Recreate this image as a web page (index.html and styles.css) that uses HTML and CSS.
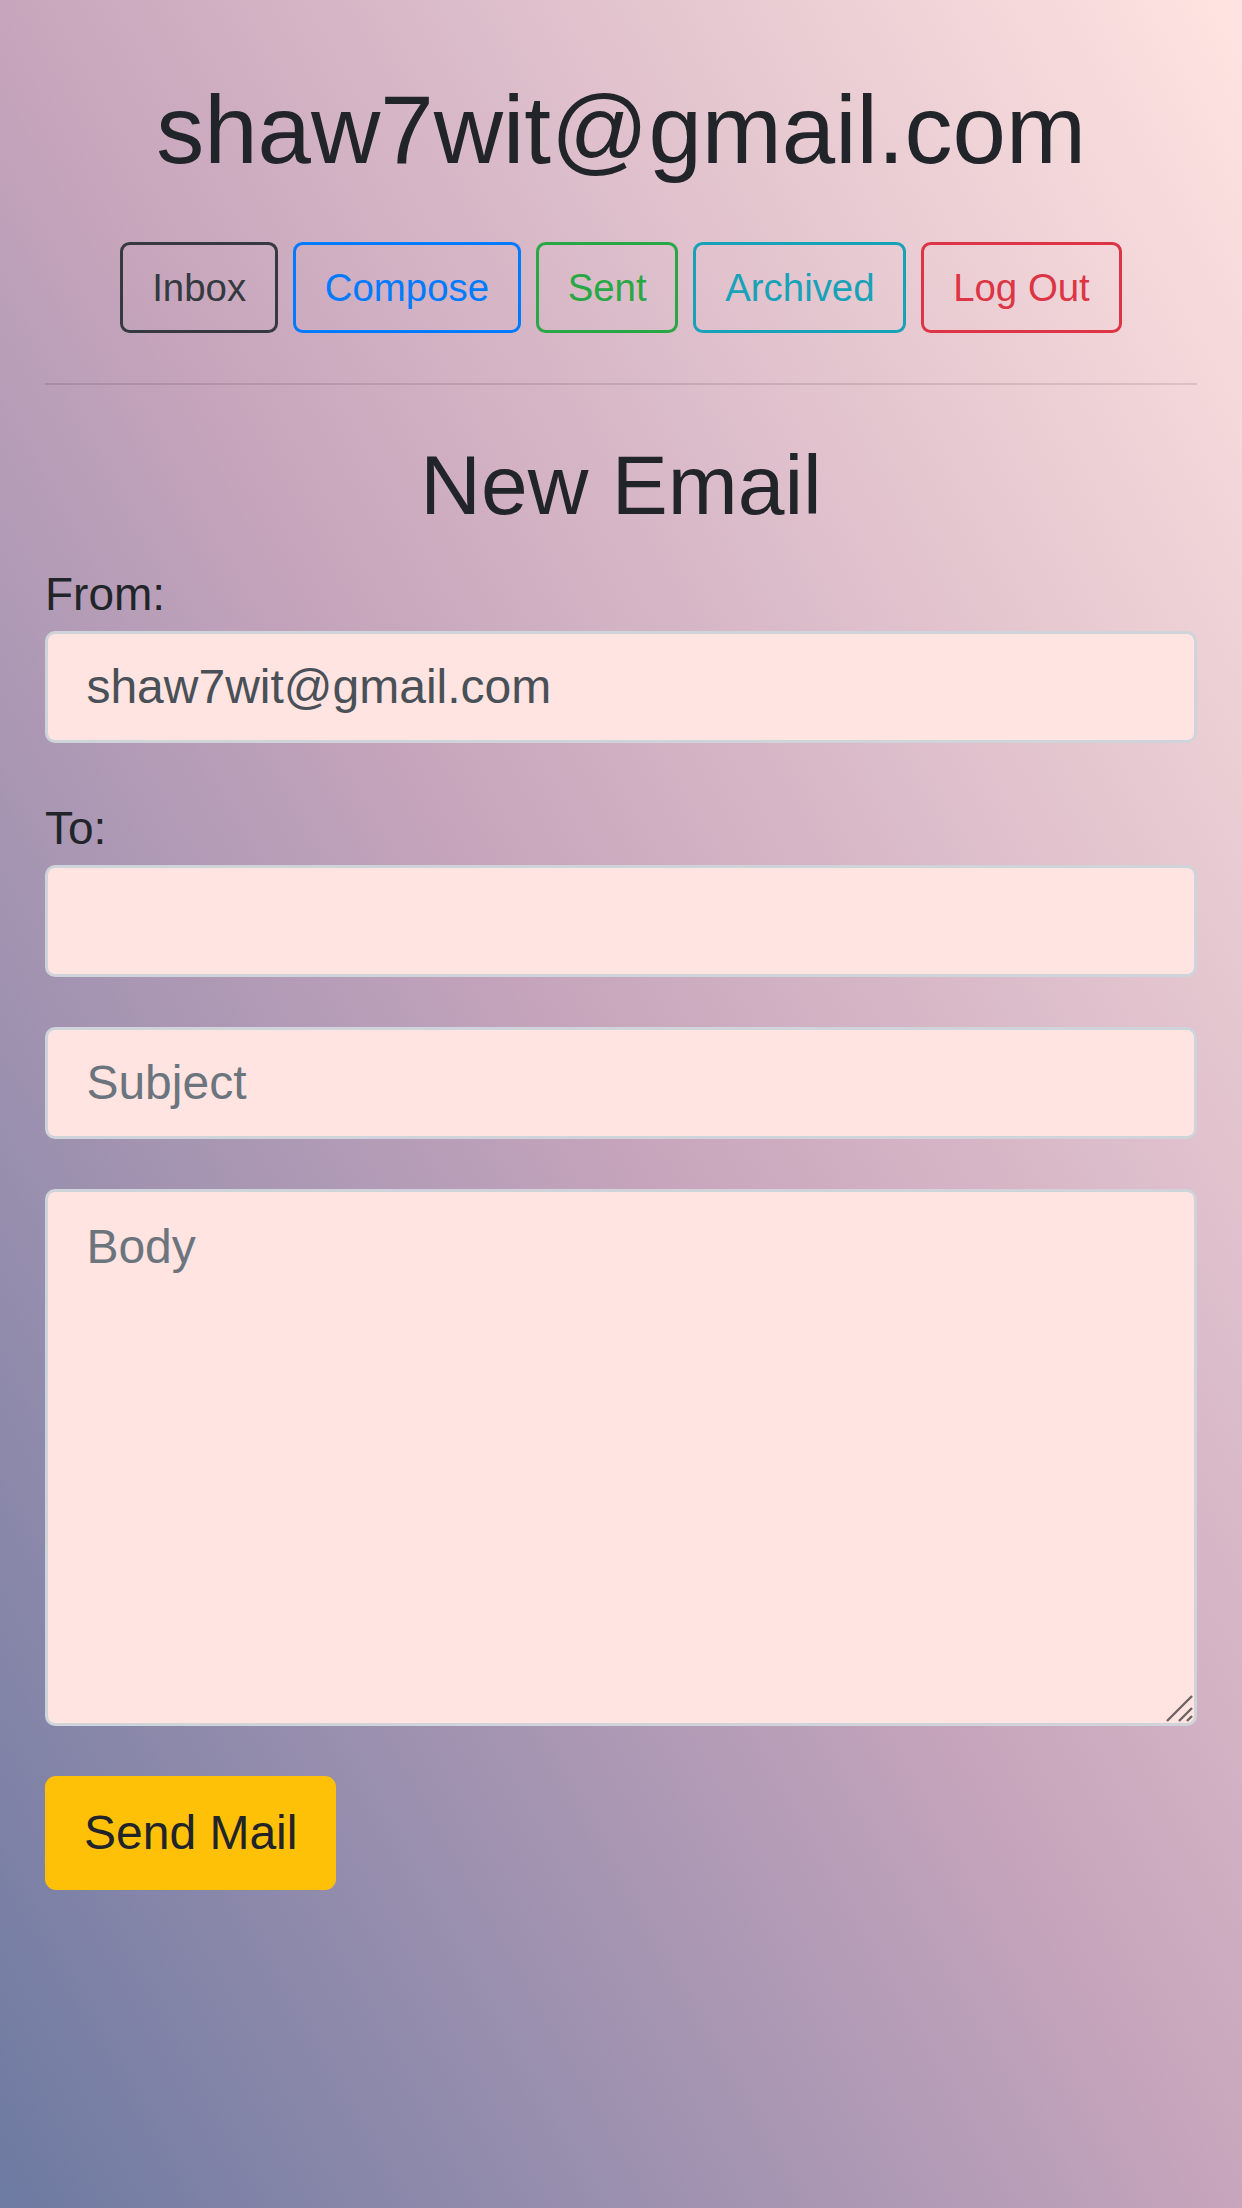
FILE: index.html
```html
<!DOCTYPE html>
<html lang="en">
<head>
<meta charset="utf-8">
<title>Mail</title>
<link rel="stylesheet" href="styles.css">
</head>
<body>
<div class="container">
  <h1 class="user">shaw7wit@gmail.com</h1>
  <nav class="nav">
    <button class="btn btn-dark">Inbox</button>
    <button class="btn btn-primary">Compose</button>
    <button class="btn btn-success">Sent</button>
    <button class="btn btn-info">Archived</button>
    <a class="btn btn-danger" href="#">Log Out</a>
  </nav>
  <hr class="divider">
  <h3 class="title">New Email</h3>
  <form class="compose">
    <div class="group group-first">
      <label class="label">From:</label>
      <input class="field field-from" value="shaw7wit@gmail.com" disabled>
    </div>
    <div class="group">
      <label class="label">To:</label>
      <input class="field">
    </div>
    <div class="group">
      <input class="field" placeholder="Subject">
    </div>
    <div class="group area-wrap">
      <textarea class="field area" placeholder="Body"></textarea>
      <svg class="grip" width="28" height="28" viewBox="0 0 28 28" aria-hidden="true">
        <path d="M2 27 L27 2 M14 27 L27 14 M22 27 L27 22" stroke="#6b6464" stroke-width="2.4" fill="none"/>
      </svg>
    </div>
    <button type="button" class="send">Send Mail</button>
  </form>
</div>
</body>
</html>
```
FILE: styles.css
```css
html {
  min-height: 100%;
  background: linear-gradient(to top right, #6d7aa1 0%, #c7a5bc 50%, #ffe4e1 100%);
}
body {
  margin: 0;
  min-height: 2208px;
  font-family: "Liberation Sans", Arial, sans-serif;
  color: #212529;
}
.container {
  margin: 0 45px;
  padding-top: 72px;
}
.user {
  margin: 0;
  font-size: 96px;
  font-weight: 400;
  line-height: 115.2px;
  text-align: center;
}
.nav {
  margin-top: 55px;
  display: flex;
  justify-content: center;
  gap: 15px;
}
.btn {
  display: inline-block;
  box-sizing: border-box;
  height: 91.2px;
  padding: 14px 28.8px;
  font-family: inherit;
  font-size: 38.4px;
  line-height: 57.6px;
  background: transparent;
  border: 3px solid;
  border-radius: 9.6px;
  text-decoration: none;
}
.btn-dark { color: #343a40; border-color: #343a40; }
.btn-primary { color: #007bff; border-color: #007bff; }
.btn-success { color: #28a745; border-color: #28a745; }
.btn-info { color: #17a2b8; border-color: #17a2b8; }
.btn-danger { color: #dc3545; border-color: #dc3545; }
.divider {
  margin: 50px 0 0;
  border: 0;
  border-top: 2.4px solid rgba(0, 0, 0, 0.1);
}
.title {
  margin: 50px 0 24px;
  font-size: 84px;
  font-weight: 400;
  line-height: 100.8px;
  text-align: center;
}
.compose { margin: 0; }
.group { margin-bottom: 50px; }
.group-first { margin-bottom: 51.5px; }
.label {
  display: block;
  font-size: 46px;
  line-height: 69px;
  margin-bottom: 1.5px;
}
.field {
  display: block;
  box-sizing: border-box;
  width: 100%;
  height: 112px;
  margin: 0;
  padding: 0 38.4px;
  font-family: inherit;
  font-size: 48px;
  color: #495057;
  background: #ffe4e1;
  border: 3px solid #ced4da;
  border-radius: 10px;
  outline: none;
}
.field-from { -webkit-text-fill-color: #495057; opacity: 1; }
.field::placeholder { color: #6c757d; }
.area-wrap { position: relative; }
.area {
  height: 537px;
  padding: 19.2px 38.4px;
  line-height: 72px;
  resize: none;
}
.grip {
  position: absolute;
  right: 4px;
  bottom: 4px;
}
.send {
  box-sizing: border-box;
  height: 114px;
  padding: 0 37px;
  font-family: inherit;
  font-size: 48px;
  color: #212529;
  background: #ffc107;
  border: 2.4px solid #ffc107;
  border-radius: 11px;
}
```
